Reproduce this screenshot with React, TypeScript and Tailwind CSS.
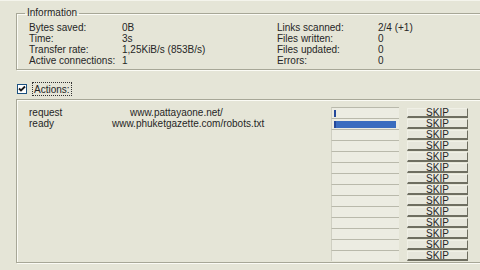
import React from "react";

type InfoRow = { label: string; value: string; label2: string; value2: string };

const infoRows: InfoRow[] = [
  {label: "Bytes saved:", value: "0B", label2: "Links scanned:", value2: "2/4 (+1)"},
  {label: "Time:", value: "3s", label2: "Files written:", value2: "0"},
  {label: "Transfer rate:", value: "1,25KiB/s (853B/s)", label2: "Files updated:", value2: "0"},
  {label: "Active connections:", value: "1", label2: "Errors:", value2: "0"},
];

type Slot = { status: string; url: string; indent: number; progress: number | null };

const slots: Slot[] = [
  {status: "request", url: "www.pattayaone.net/", indent: 101, progress: 3},
  {status: "ready", url: "www.phuketgazette.com/robots.txt", indent: 83, progress: 96},
  ...Array.from({length: 12}, () => ({status: "", url: "", indent: 0, progress: null})),
];

export default function App(): React.JSX.Element {
  return (
    <div
      className="w-[480px] h-[270px] overflow-hidden bg-[#e5e5d7] text-[#262626] pl-[16px] pt-[7px] border-t border-[#f4f4ec]"
      style={{fontFamily: '"Liberation Sans", Arial, sans-serif'}}
    >
      {/* Information */}
      <fieldset className="w-[490px] h-[62px] border border-[#a7a797] shadow-[inset_1px_1px_0_#fbfbf5,1px_1px_0_#fbfbf5]">
        <legend className="ml-[8px] px-[2px] text-[10px] leading-[10px]">Information</legend>
        <div className="flex flex-col text-[10px] leading-[11px] pl-[12px] pt-[4px]">
          {infoRows.map((r) => (
            <div key={r.label} className="flex h-[11px] items-center">
              <span className="w-[93px]">{r.label}</span>
              <span className="w-[155px]">{r.value}</span>
              <span className="w-[101px]">{r.label2}</span>
              <span>{r.value2}</span>
            </div>
          ))}
        </div>
      </fieldset>

      {/* Actions checkbox */}
      <div className="flex items-center h-[16px] mt-[11px] pl-[1px]">
        <span className="w-[10px] h-[10px] border border-[#1c5180] bg-white flex items-center justify-center">
          <svg width="8" height="8" viewBox="0 0 8 8">
            <path d="M1 3.5 L3 5.5 L7 1.5" stroke="#1a1a1a" strokeWidth="1.8" fill="none"/>
          </svg>
        </span>
        <span className="ml-[5px] px-[1px] h-[14px] flex items-center border border-dotted border-[#333] text-[10px]">
          Actions:
        </span>
      </div>

      {/* Actions box */}
      <div className="w-[490px] h-[164px] mt-[2px] border border-[#a7a797] shadow-[inset_1px_1px_0_#fbfbf5,1px_1px_0_#fbfbf5] pl-[12px] pt-[7px]">
        <div className="flex flex-col">
          {slots.map((s, i) => (
            <div key={i} className="flex h-[11px] items-center text-[10px]">
              <div className="w-[302px] flex items-center">
                <span className="w-[0px] whitespace-nowrap">{s.status}</span>
                <span className="whitespace-nowrap" style={{marginLeft: s.indent}}>{s.url}</span>
              </div>
              <div className="w-[68px] h-[11px] border-l border-[#cfcfc2] border-t border-t-[#b9b9ab] bg-[#ececE2] flex items-center pl-[2px]">
                {s.progress !== null ? (
                  <div
                    className="h-[7px] bg-[#3a6cbf] border-l-2 border-[#24489a]"
                    style={{width: `${s.progress}%`}}
                  />
                ) : null}
              </div>
              <div className="w-[61px] h-[10px] ml-[8px] border-b-2 border-r border-[#6e6e60] border-t border-l border-t-[#f0f0e6] border-l-[#f0f0e6] bg-[#e7e7dc] flex items-center justify-center text-[10px] leading-[9px]">
                SKIP
              </div>
            </div>
          ))}
        </div>
      </div>
    </div>
  );
}
